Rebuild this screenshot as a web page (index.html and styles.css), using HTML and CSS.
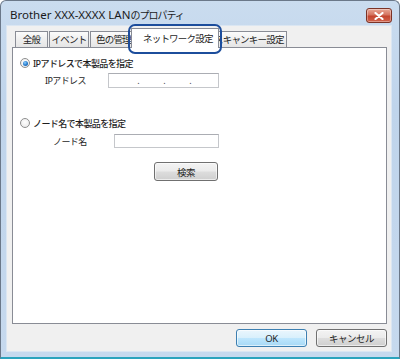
FILE: index.html
```html
<!DOCTYPE html>
<html lang="ja">
<head>
    <meta charset="UTF-8">
    <title>Brother XXX-XXXX LANのプロパティ</title>
    <link rel="stylesheet" href="styles.css">
</head>
<body>
    <div class="window">
        <!-- Title bar -->
        <div class="titlebar">
            <span class="title">Brother XXX-XXXX LAN<span class="jp">のプロパティ</span></span>
            <button class="close-btn" aria-label="閉じる">
                <svg width="10" height="8" viewBox="0 0 10 8">
                    <path d="M1.5 1 L8.5 7 M8.5 1 L1.5 7" stroke="#ffffff" stroke-width="2.2" stroke-linecap="round"/>
                </svg>
            </button>
        </div>

        <div class="client">
            <!-- Tabs -->
            <div class="tabs">
                <div class="tab tab-general">全般</div>
                <div class="tab tab-event">イベント</div>
                <div class="tab tab-color">色の管理</div>
                <div class="tab tab-network active">ネットワーク設定</div>
                <div class="tab tab-scan">スキャンキー設定</div>
            </div>

            <div class="panel">
                <div class="option">
                    <span class="radio checked"></span>
                    <span class="option-label">IPアドレスで本製品を指定</span>
                </div>
                <div class="field field-ip">
                    <span class="field-label">IPアドレス</span>
                    <div class="input ip-input">
                        <span class="octet">.</span>
                        <span class="octet">.</span>
                        <span class="octet">.</span>
                    </div>
                </div>

                <div class="option option-node">
                    <span class="radio"></span>
                    <span class="option-label">ノード名で本製品を指定</span>
                </div>
                <div class="field field-node">
                    <span class="field-label">ノード名</span>
                    <div class="input node-input"></div>
                </div>

                <button class="btn search-btn">検索</button>
            </div>

            <!-- Dialog buttons -->
            <div class="actions">
                <button class="btn btn-default">OK</button>
                <button class="btn">キャンセル</button>
            </div>
        </div>

        <!-- Annotation round the active tab -->
        <div class="highlight"></div>
    </div>
</body>
</html>
```

FILE: styles.css
```css
* {
    margin: 0;
    padding: 0;
    box-sizing: border-box;
}

body {
    width: 400px;
    height: 359px;
    overflow: hidden;
    background: #ffffff;
    font-family: 'Noto Sans', 'Noto Sans CJK JP', sans-serif;
    color: #1e1e1e;
}

.window {
    position: relative;
    width: 400px;
    height: 359px;
    display: flex;
    flex-direction: column;
    border: 1px solid #6b7889;
    border-bottom: 2px solid #2ba3bd;
    border-radius: 6px 6px 0 0;
    background: linear-gradient(180deg, #cadcef 0%, #bfd4eb 30%, #c6d9ee 100%);
    padding: 0 7px 5px 5px;
}

/* Title bar */
.titlebar {
    height: 24px;
    display: flex;
    justify-content: space-between;
    align-items: flex-start;
}

.title {
    margin: 7px 0 0 4px;
    font-size: 11.5px;
    line-height: 14px;
    color: #1a1a1a;
}

.title .jp {
    font-size: 10px;
    letter-spacing: -1px;
}

.close-btn {
    margin-top: 7px;
    width: 26px;
    height: 15px;
    border: 1px solid #7b3326;
    border-radius: 3px;
    background: linear-gradient(180deg, #e9a897 0%, #d4735f 45%, #c4452f 55%, #d0634c 100%);
    display: flex;
    align-items: center;
    justify-content: center;
    box-shadow: inset 0 0 0 1px rgba(255, 255, 255, 0.35);
}

/* Dialog client area */
.client {
    flex: 1;
    display: flex;
    flex-direction: column;
    border: 1px solid #dbe6f2;
    background: #f0f0f0;
}

.tabs {
    height: 21px;
    display: flex;
    align-items: flex-end;
    padding-left: 8px;
    font-size: 9.5px;
    letter-spacing: -0.8px;
}

.tab {
    height: 16px;
    line-height: 15px;
    text-align: center;
    white-space: nowrap;
    overflow: hidden;
    border: 1px solid #898c95;
    border-bottom: none;
    background: linear-gradient(180deg, #fbfbfb 0%, #efefef 50%, #e5e5e5 100%);
}

.tab-general { width: 33px; }
.tab-event { width: 40px; margin-left: 1px; }
.tab-color { width: 44px; margin-left: 1px; text-align: left; padding-left: 5px; }
.tab-scan { width: 76px; margin-left: -8px; text-align: left; padding-left: 2px; }

.tab.active {
    position: relative;
    z-index: 1;
    width: 88px;
    height: 20px;
    margin-left: -3px;
    margin-bottom: -1px;
    line-height: 19px;
    text-align: left;
    padding-left: 11px;
    background: #ffffff;
}

.panel {
    flex: 1;
    margin: 0 4px 0 5px;
    border: 1px solid #898c95;
    background: #ffffff;
    padding: 9px 0 0 7px;
    font-size: 9px;
    letter-spacing: -0.6px;
}

.option {
    height: 12px;
    display: flex;
    align-items: center;
    gap: 3px;
}

.option-label {
    font-weight: 500;
}

.option-node {
    margin-top: 29px;
}

.radio {
    width: 10px;
    height: 10px;
    border-radius: 50%;
    border: 1px solid #8e8f8f;
    background: radial-gradient(circle at 50% 40%, #ffffff 0%, #e6e6e6 100%);
    display: flex;
    align-items: center;
    justify-content: center;
}

.radio.checked::after {
    content: '';
    width: 5px;
    height: 5px;
    border-radius: 50%;
    background: radial-gradient(circle at 40% 35%, #8fd0ff 0%, #2a7fcf 50%, #0f4f96 100%);
}

.field {
    display: flex;
    align-items: center;
    margin-top: 4px;
}

.field-label {
    white-space: nowrap;
}

.field-ip .field-label {
    margin-left: 25px;
    width: 63px;
}

.field-node {
    margin-top: 5px;
}

.field-node .field-label {
    margin-left: 33px;
    width: 61px;
}

.input {
    border: 1px solid #c5c7cb;
    border-top-color: #abadb3;
    background: #ffffff;
}

.ip-input {
    width: 111px;
    height: 15px;
    display: flex;
    padding-left: 4px;
    font-size: 9px;
    line-height: 13px;
}

.octet {
    width: 26px;
    text-align: right;
    color: #444444;
}

.node-input {
    width: 105px;
    height: 14px;
}

.btn {
    height: 18px;
    border: 1px solid #707070;
    border-radius: 3px;
    background: linear-gradient(180deg, #f3f3f3 0%, #ebebeb 48%, #dddddd 52%, #cfcfcf 100%);
    font-family: 'Noto Sans', 'Noto Sans CJK JP', sans-serif;
    font-size: 9.5px;
    letter-spacing: -0.5px;
    color: #1e1e1e;
    box-shadow: inset 0 0 0 1px rgba(255, 255, 255, 0.6);
}

.search-btn {
    display: block;
    width: 64px;
    height: 19px;
    margin: 14px 0 0 134px;
}

.actions {
    display: flex;
    justify-content: flex-end;
    gap: 9px;
    padding: 5px 4px 0 0;
    height: 27px;
}

.actions .btn {
    width: 71px;
}

.btn-default {
    border-color: #3c7fb1;
    background: linear-gradient(180deg, #eaf6fd 0%, #d9f0fc 48%, #bee6fd 52%, #a7d9f5 100%);
}

/* Blue annotation frame */
.highlight {
    position: absolute;
    left: 127px;
    top: 23px;
    width: 94px;
    height: 30px;
    border: 2.5px solid #1c4d9c;
    border-radius: 7px;
    z-index: 5;
}
```
